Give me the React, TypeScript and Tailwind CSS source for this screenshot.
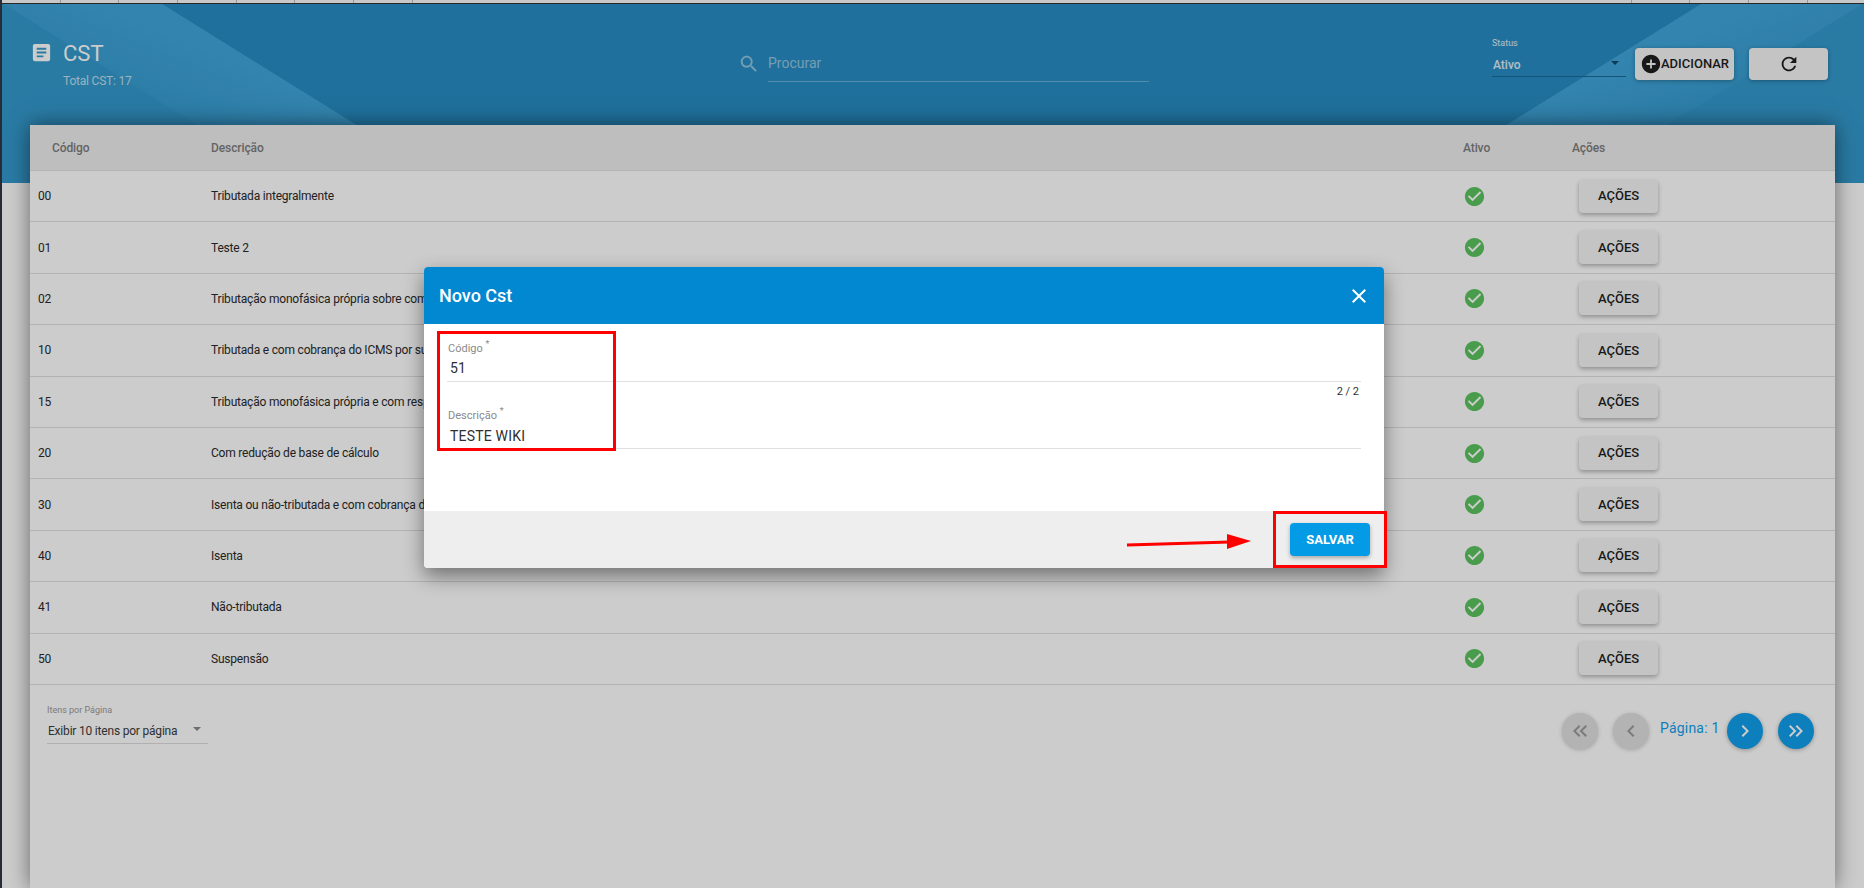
const P = {
  doc: "M19 3H5c-1.1 0-2 .9-2 2v14c0 1.1.9 2 2 2h14c1.1 0 2-.9 2-2V5c0-1.1-.9-2-2-2zm-5 14H7v-2h7v2zm3-4H7v-2h10v2zm0-4H7V7h10v2z",
  search: "M15.5 14h-.79l-.28-.27C15.41 12.59 16 11.11 16 9.5 16 5.91 13.09 3 9.5 3S3 5.91 3 9.5 5.91 16 9.5 16c1.61 0 3.09-.59 4.23-1.57l.27.28v.79l5 4.99L20.49 19l-4.99-5zm-6 0C7.01 14 5 11.99 5 9.5S7.01 5 9.5 5 14 7.01 14 9.5 11.99 14 9.5 14z",
  check: "M12 2C6.48 2 2 6.48 2 12s4.48 10 10 10 10-4.48 10-10S17.52 2 12 2zm-2 15l-5-5 1.41-1.41L10 14.17l7.59-7.59L19 8l-9 9z",
  plus: "M12 2C6.48 2 2 6.48 2 12s4.48 10 10 10 10-4.48 10-10S17.52 2 12 2zm5 11h-4v4h-2v-4H7v-2h4V7h2v4h4v2z",
  refresh: "M17.65 6.35C16.2 4.9 14.21 4 12 4c-4.42 0-7.99 3.58-7.99 8s3.57 8 7.99 8c3.73 0 6.84-2.55 7.73-6h-2.08c-.82 2.33-3.04 4-5.65 4-3.31 0-6-2.69-6-6s2.69-6 6-6c1.66 0 3.14.69 4.22 1.78L13 11h7V4l-2.35 2.35z",
  close: "M19 6.41L17.59 5 12 10.59 6.41 5 5 6.41 10.59 12 5 17.59 6.41 19 12 13.41 17.59 19 19 17.59 13.41 12z",
  right: "M10 6L8.59 7.41 13.17 12l-4.58 4.59L10 18l6-6z",
  left: "M15.41 7.41L14 6l-6 6 6 6 1.41-1.41L10.83 12z",
  last: "M6.41 6L5 7.41 9.58 12 5 16.59 6.41 18l6-6zM13 6l-1.41 1.41L16.17 12l-4.58 4.59L13 18l6-6z",
  first: "M17.59 18L19 16.59 14.42 12 19 7.41 17.59 6l-6 6zM11 18l1.41-1.41L7.83 12l4.58-4.59L11 6l-6 6z",
};

function Icon({ d, className }: { d: string; className: string }) {
  return (
    <svg viewBox="0 0 24 24" className={className} fill="currentColor" aria-hidden="true">
      <path d={d} />
    </svg>
  );
}

const rows = [
  ["00", "Tributada integralmente"],
  ["01", "Teste 2"],
  ["02", "Tributação monofásica própria sobre combustíveis"],
  ["10", "Tributada e com cobrança do ICMS por substituição tributária"],
  ["15", "Tributação monofásica própria e com responsabilidade pela retenção sobre combustíveis"],
  ["20", "Com redução de base de cálculo"],
  ["30", "Isenta ou não-tributada e com cobrança do ICMS por substituição tributária"],
  ["40", "Isenta"],
  ["41", "Não-tributada"],
  ["50", "Suspensão"],
];

function Row({ code, desc }: { code: string; desc: string }) {
  return (
    <div className="flex h-[51.4px] items-center border-b border-[#e0e0e0] text-[12px] tracking-[-0.2px] text-[#2a2a2a]">
      <div className="w-[181px] pl-2">{code}</div>
      <div className="flex-1 whitespace-nowrap">{desc}</div>
      <div className="w-[109px]">
        <Icon d={P.check} className="h-[23px] w-[23px] text-[#5ac45f]" />
      </div>
      <div className="w-[263px] pl-[7px]">
        <button className="h-[33px] w-[79px] rounded-[4px] bg-[#f5f5f5] text-[13px] font-medium tracking-normal text-[#1f1f1f] shadow-[0_2px_4px_rgba(0,0,0,0.3)]">
          AÇÕES
        </button>
      </div>
    </div>
  );
}

function PageButton({ d, active }: { d: string; active: boolean }) {
  return (
    <button
      className={
        active
          ? "flex h-9 w-9 items-center justify-center rounded-full bg-[#0f9fec] text-white shadow-[0_1px_4px_rgba(0,0,0,0.3)]"
          : "flex h-9 w-9 items-center justify-center rounded-full bg-[#e0e0e0] text-[#9a9a9a] shadow-[0_1px_4px_rgba(0,0,0,0.2)]"
      }
    >
      <Icon d={d} className="h-6 w-6" />
    </button>
  );
}

const leftTicks = [0, 1, 2, 3, 4, 5, 6];
const rightTicks = [0, 1, 2, 3, 4];

export default function App() {
  return (
    <div className="relative flex h-[888px] w-full overflow-hidden bg-white font-['Roboto',sans-serif]">
      <div className="w-[2px] shrink-0 bg-[#333848]" />
      <div className="flex min-w-0 flex-1 flex-col">
        <div className="flex h-[4px] shrink-0 border-b border-[#333] bg-[#fafafa]">
          {leftTicks.map((t) => (
            <div key={t} className="h-full w-[58.7px] shrink-0 border-r border-[#bdbdbd]" />
          ))}
          <div className="h-full w-[1160px] shrink-0" />
          {rightTicks.map((t) => (
            <div key={t} className="h-full w-[58.7px] shrink-0 border-r border-[#bdbdbd]" />
          ))}
        </div>

        <header className="relative flex h-[179px] shrink-0 items-start bg-[#278dc3]">
          <svg className="absolute inset-0 h-full w-full" viewBox="0 0 1862 179" preserveAspectRatio="none" aria-hidden="true">
            <defs>
              <linearGradient id="bandLeft" x1="0" y1="1" x2="1" y2="0">
                <stop offset="0.3" stopColor="#349ace" />
                <stop offset="0.6" stopColor="#40a5da" />
                <stop offset="1" stopColor="#40a5da" />
              </linearGradient>
              <linearGradient id="bandRight" x1="1" y1="1" x2="0" y2="0">
                <stop offset="0.3" stopColor="#349ace" />
                <stop offset="0.6" stopColor="#40a5da" />
                <stop offset="1" stopColor="#40a5da" />
              </linearGradient>
            </defs>
            <polygon points="0,0 160,0 448,179 0,179" fill="#349ace" />
            <polygon points="2,0 160,0 448,179 288,179" fill="url(#bandLeft)" />
            <polygon points="1862,0 1702,0 1414,179 1862,179" fill="#349ace" />
            <polygon points="1860,0 1699,0 1411,179 1572,179" fill="url(#bandRight)" />
          </svg>
          <div className="relative flex w-[628px] items-start pl-[28px] pt-[38px]">
            <Icon d={P.doc} className="mt-[-1px] h-[23px] w-[23px] text-white" />
            <div className="ml-[10px]">
              <div className="text-[22px] leading-[24px] text-white">CST</div>
              <div className="mt-[8px] text-[12px] leading-[14px] tracking-[-0.2px] text-white/70">Total CST: 17</div>
            </div>
          </div>
          <div className="relative flex w-[862px] items-start pl-[108px] pt-[49px]">
            <Icon d={P.search} className="h-[22px] w-[22px] text-white/50" />
            <div className="ml-[8px] h-[29px] w-[381px] border-b border-white/30 text-[14px] leading-[20px] text-white/50">
              Procurar
            </div>
          </div>
          <div className="relative flex items-start">
            <div className="w-[134px] pt-[33px]">
              <div className="text-[9px] leading-[12px] text-white/85">Status</div>
              <div className="mt-[3px] flex h-[25px] items-center justify-between border-b border-[#1a6a96] pl-[1px] pr-[7px] pt-[1px] text-[12px] font-medium text-white/85">
                <span>Ativo</span>
                <span className="mb-[4px] h-0 w-0 border-x-[4px] border-t-[4px] border-x-transparent border-t-[#0f4a6e]" />
              </div>
            </div>
            <button className="ml-[9px] mt-[44px] flex h-8 w-[99px] items-center rounded-[4px] bg-[#f5f5f5] pl-[5px] text-[13px] font-medium text-[#1f1f1f] shadow-[0_1px_4px_rgba(0,0,0,0.3)]">
              <Icon d={P.plus} className="h-[22px] w-[22px] -mr-[1px] shrink-0" />
              ADICIONAR
            </button>
            <button className="ml-[15px] mt-[44px] flex h-8 w-[79px] items-center justify-center rounded-[4px] bg-[#f5f5f5] text-[#1f1f1f] shadow-[0_1px_4px_rgba(0,0,0,0.3)]">
              <Icon d={P.refresh} className="h-[22px] w-[22px]" />
            </button>
          </div>
        </header>

        <main className="z-0 ml-[28px] mr-[29px] -mt-[58px] flex-1 bg-white shadow-[0_0_20px_rgba(0,0,0,0.5)]">
          <div className="flex h-[46px] items-center border-b border-[#e0e0e0] bg-[#eeeeee] text-[12px] font-medium tracking-[-0.1px] text-[#7d7d7d]">
            <div className="w-[181px] pl-[22px]">Código</div>
            <div className="flex-1">Descrição</div>
            <div className="w-[109px]">Ativo</div>
            <div className="w-[263px]">Ações</div>
          </div>
          {rows.map(([c, d]) => (
            <Row key={c} code={c} desc={d} />
          ))}
          <div className="flex items-start justify-between pl-[17px] pr-[21px] pt-[19px]">
            <div className="w-[161px]">
              <div className="text-[9px] leading-[12px] text-[#9a9a9a]">Itens por Página</div>
              <div className="mt-[2px] flex h-[26px] items-center justify-between border-b border-[#dcdcdc] pl-[1px] pr-[7px] pt-[1px] text-[12px] tracking-[-0.2px] text-[#3c3c3c]">
                <span>Exibir 10 itens por página</span>
                <span className="mb-[4px] h-0 w-0 border-x-[4px] border-t-[4px] border-x-transparent border-t-[#8a8a8a]" />
              </div>
            </div>
            <div className="flex items-start pt-[9px]">
              <PageButton d={P.first} active={false} />
              <div className="w-[15px]" />
              <PageButton d={P.left} active={false} />
              <div className="w-[78px] pl-[11px] pt-[5px] text-[14px] leading-[20px] tracking-[0.2px] text-[#0f9fec]">Página: 1</div>
              <PageButton d={P.right} active />
              <div className="w-[15px]" />
              <PageButton d={P.last} active />
            </div>
          </div>
        </main>
      </div>

      <div className="absolute inset-0 z-10 bg-black/20" />

      <section className="absolute left-[424px] top-[267px] z-20 flex h-[301px] w-[960px] flex-col overflow-hidden rounded-[4px] bg-white shadow-[0_8px_20px_rgba(0,0,0,0.45)]">
        <div className="flex h-[57px] shrink-0 items-center justify-between bg-[#0288d1] pl-[15px] pr-[13px] text-white">
          <h2 className="text-[18px] font-medium">Novo Cst</h2>
          <Icon d={P.close} className="h-6 w-6" />
        </div>
        <div className="flex-1 pl-[23px] pr-[23px] pt-[16px]">
          <div className="h-[42px] border-b border-[#e0e0e0]">
            <div className="pl-[1px] text-[11px] leading-[13px] text-[#8a8a8a]">Código <span className="align-super text-[9px] leading-none">*</span></div>
            <div className="mt-[3px] pl-[3px] text-[14px] leading-[20px] tracking-[0.2px] text-[#2f2f2f]">51</div>
          </div>
          <div className="pr-[2px] pt-[3px] text-right text-[11px] leading-[13px] text-[#333]">2 / 2</div>
          <div className="mt-[9px] h-[42px] border-b border-[#e0e0e0]">
            <div className="pl-[1px] text-[11px] leading-[13px] text-[#8a8a8a]">Descrição <span className="align-super text-[9px] leading-none">*</span></div>
            <div className="mt-[4px] pl-[3px] text-[14px] leading-[20px] tracking-[0.2px] text-[#2f2f2f]">TESTE WIKI</div>
          </div>
        </div>
        <div className="flex h-[57px] shrink-0 items-center justify-end bg-[#eeeeee] pr-[14px]">
          <button className="h-[33px] w-[80px] rounded-[4px] bg-[#039be5] text-[13px] font-bold text-white shadow-[0_2px_4px_rgba(0,0,0,0.3)]">
            SALVAR
          </button>
        </div>
      </section>

      <div className="absolute left-[437px] top-[331px] z-30 h-[120px] w-[179px] border-[3px] border-[#ff0000]" />
      <div className="absolute left-[1273px] top-[511px] z-30 h-[57px] w-[114px] border-[3px] border-[#ff0000]" />
      <svg className="absolute left-[1120px] top-[530px] z-30 h-[24px] w-[140px]" viewBox="0 0 140 24" aria-hidden="true">
        <line x1="7" y1="15" x2="110" y2="12" stroke="#ff0000" strokeWidth="3" />
        <polygon points="107,4 131,11 107,19" fill="#ff0000" />
      </svg>
    </div>
  );
}
